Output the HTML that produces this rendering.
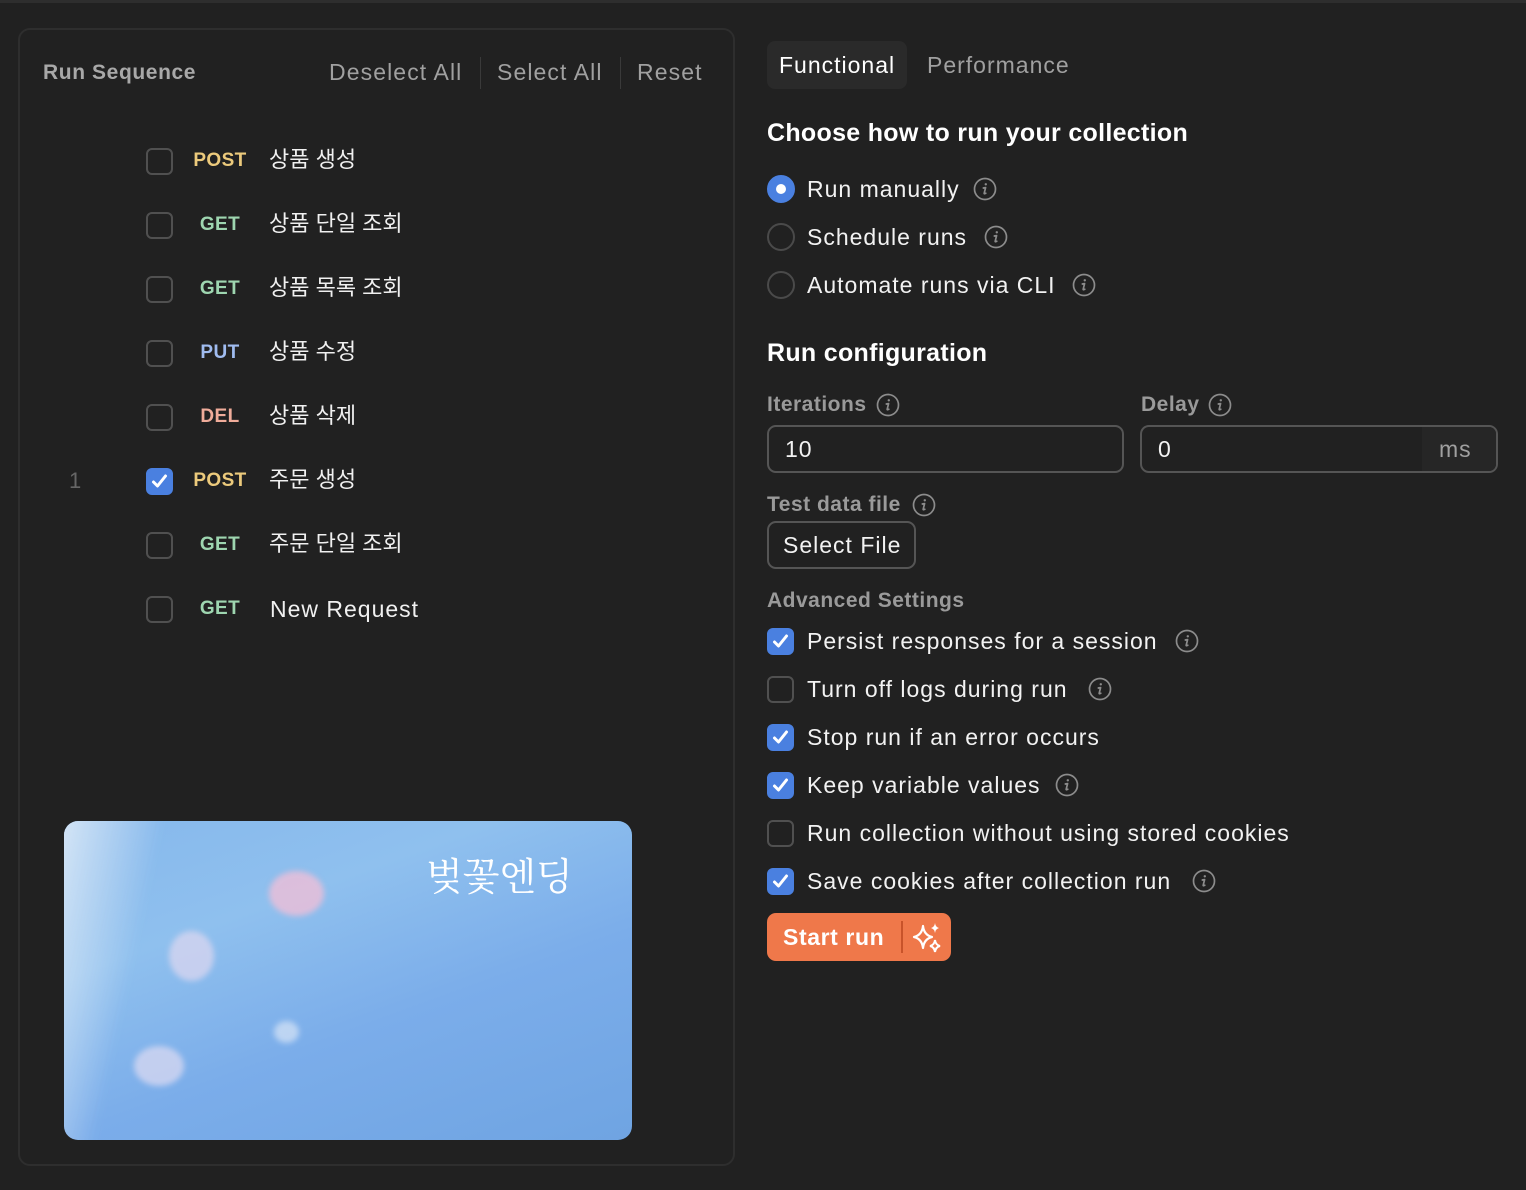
<!DOCTYPE html>
<html><head><meta charset="utf-8"><style>
*{margin:0;padding:0;box-sizing:border-box}
body{width:1526px;height:1190px;background:#212121;font-family:"Liberation Sans","Noto Sans CJK KR",sans-serif;color:#f0f0f0;position:relative;overflow:hidden}
.a{position:absolute;white-space:nowrap;line-height:30px}
.cb{position:absolute;width:27px;height:27px;border:2px solid #505050;border-radius:6px}
.cb.on{background:#4a80e0;border-color:#4a80e0}
.cb.on svg{position:absolute;left:2px;top:2px}
.m{font-weight:bold;font-size:19px;text-align:center;width:60px;letter-spacing:0.4px}
.n{font-size:22px;color:#f0f0f0}
.lbl{font-size:23px;color:#f2f2f2;letter-spacing:1px}
.h{font-size:25px;font-weight:bold;color:#fff;letter-spacing:0.3px}
.sub{font-size:21px;font-weight:bold;color:#9a9a9a;letter-spacing:0.5px}
.rd{position:absolute;width:28px;height:28px;border-radius:50%;border:2px solid #4a4a4a}
.info{position:absolute;width:24px;height:24px}
.box{position:absolute;border:2px solid #555;border-radius:9px}
.blob{position:absolute;border-radius:50%;filter:blur(3px)}
</style></head><body>
<div style="position:absolute;left:0;top:0;width:1526px;height:3px;background:#2e2e2e"></div>
<div style="position:absolute;left:18px;top:28px;width:717px;height:1138px;border:2px solid #2e2e2e;border-radius:12px"></div>

<div class="a" style="left:43px;top:58px;font-size:21px;font-weight:bold;color:#a8a8a8;letter-spacing:0.6px">Run Sequence</div>
<div class="a" style="left:329px;top:57px;font-size:23px;color:#a0a0a0;letter-spacing:1.1px">Deselect All</div>
<div style="position:absolute;left:480px;top:57px;width:1px;height:32px;background:#3a3a3a"></div>
<div class="a" style="left:497px;top:57px;font-size:23px;color:#a0a0a0;letter-spacing:1.1px">Select All</div>
<div style="position:absolute;left:620px;top:57px;width:1px;height:32px;background:#3a3a3a"></div>
<div class="a" style="left:637px;top:57px;font-size:23px;color:#a0a0a0;letter-spacing:1.1px">Reset</div>

<div class="cb" style="left:146px;top:148px"></div><div class="a m" style="left:190px;top:146px;color:#ecca7c">POST</div><div class="a n" style="left:269px;top:145px">상품 생성</div>
<div class="cb" style="left:146px;top:212px"></div><div class="a m" style="left:190px;top:210px;color:#9ed6b0">GET</div><div class="a n" style="left:269px;top:209px">상품 단일 조회</div>
<div class="cb" style="left:146px;top:276px"></div><div class="a m" style="left:190px;top:274px;color:#9ed6b0">GET</div><div class="a n" style="left:269px;top:273px">상품 목록 조회</div>
<div class="cb" style="left:146px;top:340px"></div><div class="a m" style="left:190px;top:338px;color:#a0bcf0">PUT</div><div class="a n" style="left:269px;top:337px">상품 수정</div>
<div class="cb" style="left:146px;top:404px"></div><div class="a m" style="left:190px;top:402px;color:#f0ac9a">DEL</div><div class="a n" style="left:269px;top:401px">상품 삭제</div>
<div class="a" style="left:69px;top:466px;font-size:22px;color:#666">1</div>
<div class="cb on" style="left:146px;top:468px"><svg width="19" height="19" viewBox="0 0 19 19"><path d="M3.5 10 L7.5 14 L15.5 4" stroke="#fff" stroke-width="3" fill="none" stroke-linecap="round" stroke-linejoin="round"/></svg></div><div class="a m" style="left:190px;top:466px;color:#ecca7c">POST</div><div class="a n" style="left:269px;top:465px">주문 생성</div>
<div class="cb" style="left:146px;top:532px"></div><div class="a m" style="left:190px;top:530px;color:#9ed6b0">GET</div><div class="a n" style="left:269px;top:529px">주문 단일 조회</div>
<div class="cb" style="left:146px;top:596px"></div><div class="a m" style="left:190px;top:594px;color:#9ed6b0">GET</div><div class="a n" style="left:270px;top:594px;font-size:23px;letter-spacing:1px">New Request</div>

<div style="position:absolute;left:64px;top:821px;width:568px;height:319px;border-radius:14px;overflow:hidden;background:linear-gradient(160deg,#86b8ec 0%,#8fc0ee 30%,#7badea 60%,#6fa4e2 100%)">
 <div style="position:absolute;left:-50px;top:-20px;width:110px;height:400px;background:linear-gradient(90deg,#dceaf7,rgba(200,225,245,0));transform:rotate(12deg);filter:blur(4px)"></div>
 <div class="blob" style="left:205px;top:50px;width:55px;height:45px;background:#efbfd8;opacity:.8"></div>
 <div class="blob" style="left:105px;top:110px;width:45px;height:50px;background:#e0d8f0;opacity:.7"></div>
 <div class="blob" style="left:70px;top:225px;width:50px;height:40px;background:#e0dcf2;opacity:.7"></div>
 <div class="blob" style="left:210px;top:200px;width:25px;height:22px;background:#e8eef8;opacity:.6"></div>
 <div class="a" style="left:362px;top:28px;font-size:38px;line-height:50px;color:#fff;font-family:'Noto Serif CJK SC','Noto Sans CJK KR',serif">벚꽃엔딩</div>
</div>

<div style="position:absolute;left:767px;top:41px;width:140px;height:48px;background:#2a2a2a;border-radius:8px"></div>
<div class="a lbl" style="left:779px;top:50px;color:#fff">Functional</div>
<div class="a lbl" style="left:927px;top:50px;color:#a0a0a0">Performance</div>
<div class="a h" style="left:767px;top:118px">Choose how to run your collection</div>

<div class="rd" style="left:767px;top:175px;background:#4a80e0;border-color:#4a80e0"><div style="position:absolute;left:7px;top:7px;width:10px;height:10px;border-radius:50%;background:#fff"></div></div>
<div class="a lbl" style="left:807px;top:174px">Run manually</div>
<div class="rd" style="left:767px;top:223px"></div><div class="a lbl" style="left:807px;top:222px">Schedule runs</div>
<div class="rd" style="left:767px;top:271px"></div><div class="a lbl" style="left:807px;top:270px">Automate runs via CLI</div>

<div class="a h" style="left:767px;top:338px">Run configuration</div>
<div class="a sub" style="left:767px;top:390px">Iterations</div>
<div class="a sub" style="left:1141px;top:390px">Delay</div>
<div class="box" style="left:767px;top:425px;width:357px;height:48px"></div>
<div class="a lbl" style="left:785px;top:434px">10</div>
<div class="box" style="left:1140px;top:425px;width:358px;height:48px;overflow:hidden"><div style="position:absolute;right:0;top:0;width:74px;height:100%;background:#262626"></div></div>
<div class="a lbl" style="left:1158px;top:434px">0</div>
<div class="a lbl" style="left:1439px;top:434px;color:#a0a0a0">ms</div>

<div class="a sub" style="left:767px;top:490px">Test data file</div>
<div class="box" style="left:767px;top:521px;width:149px;height:48px"></div>
<div class="a lbl" style="left:783px;top:530px">Select File</div>

<div class="a sub" style="left:767px;top:586px">Advanced Settings</div>
<div class="cb on" style="left:767px;top:628px"><svg width="19" height="19" viewBox="0 0 19 19"><path d="M3.5 10 L7.5 14 L15.5 4" stroke="#fff" stroke-width="3" fill="none" stroke-linecap="round" stroke-linejoin="round"/></svg></div>
<div class="a lbl" style="left:807px;top:626px">Persist responses for a session</div>
<div class="cb" style="left:767px;top:676px"></div>
<div class="a lbl" style="left:807px;top:674px">Turn off logs during run</div>
<div class="cb on" style="left:767px;top:724px"><svg width="19" height="19" viewBox="0 0 19 19"><path d="M3.5 10 L7.5 14 L15.5 4" stroke="#fff" stroke-width="3" fill="none" stroke-linecap="round" stroke-linejoin="round"/></svg></div>
<div class="a lbl" style="left:807px;top:722px">Stop run if an error occurs</div>
<div class="cb on" style="left:767px;top:772px"><svg width="19" height="19" viewBox="0 0 19 19"><path d="M3.5 10 L7.5 14 L15.5 4" stroke="#fff" stroke-width="3" fill="none" stroke-linecap="round" stroke-linejoin="round"/></svg></div>
<div class="a lbl" style="left:807px;top:770px">Keep variable values</div>
<div class="cb" style="left:767px;top:820px"></div>
<div class="a lbl" style="left:807px;top:818px">Run collection without using stored cookies</div>
<div class="cb on" style="left:767px;top:868px"><svg width="19" height="19" viewBox="0 0 19 19"><path d="M3.5 10 L7.5 14 L15.5 4" stroke="#fff" stroke-width="3" fill="none" stroke-linecap="round" stroke-linejoin="round"/></svg></div>
<div class="a lbl" style="left:807px;top:866px">Save cookies after collection run</div>

<div style="position:absolute;left:767px;top:913px;width:184px;height:48px;background:#ef784a;border-radius:9px"></div>
<div class="a" style="left:783px;top:922px;font-size:23px;font-weight:bold;color:#fff;letter-spacing:0.6px">Start run</div>
<div style="position:absolute;left:901px;top:921px;width:2px;height:32px;background:#c8532a"></div>
<svg style="position:absolute;left:910px;top:920px" width="34" height="34" viewBox="0 0 34 34"><path d="M13 6 Q14 15 22 17 Q14 19 13 28 Q12 19 4 17 Q12 15 13 6Z" fill="none" stroke="#fff" stroke-width="2.2" stroke-linejoin="round"/><path d="M25 3 Q25.5 7 29 8 Q25.5 9 25 13 Q24.5 9 21 8 Q24.5 7 25 3Z" fill="#fff"/><path d="M25 20 Q25.6 25 30 26 Q25.6 27 25 32 Q24.4 27 20 26 Q24.4 25 25 20Z" fill="none" stroke="#fff" stroke-width="2"/></svg>

<svg width="0" height="0" style="position:absolute"><defs><symbol id="i" viewBox="0 0 24 24"><circle cx="12" cy="12" r="10.5" fill="none" stroke="#8c8c8c" stroke-width="1.7"/><circle cx="12.8" cy="7.3" r="1.2" fill="#8c8c8c"/><path d="M10.3 11 L12.6 10.6 L11.2 16.2 Q11 17.3 12.8 16.3" fill="none" stroke="#8c8c8c" stroke-width="1.7" stroke-linecap="round" stroke-linejoin="round"/></symbol></defs></svg>
<svg class="info" style="left:973px;top:177px"><use href="#i"/></svg>
<svg class="info" style="left:984px;top:225px"><use href="#i"/></svg>
<svg class="info" style="left:1072px;top:273px"><use href="#i"/></svg>
<svg class="info" style="left:876px;top:393px"><use href="#i"/></svg>
<svg class="info" style="left:1208px;top:393px"><use href="#i"/></svg>
<svg class="info" style="left:912px;top:493px"><use href="#i"/></svg>
<svg class="info" style="left:1175px;top:629px"><use href="#i"/></svg>
<svg class="info" style="left:1088px;top:677px"><use href="#i"/></svg>
<svg class="info" style="left:1055px;top:773px"><use href="#i"/></svg>
<svg class="info" style="left:1192px;top:869px"><use href="#i"/></svg>
</body></html>
